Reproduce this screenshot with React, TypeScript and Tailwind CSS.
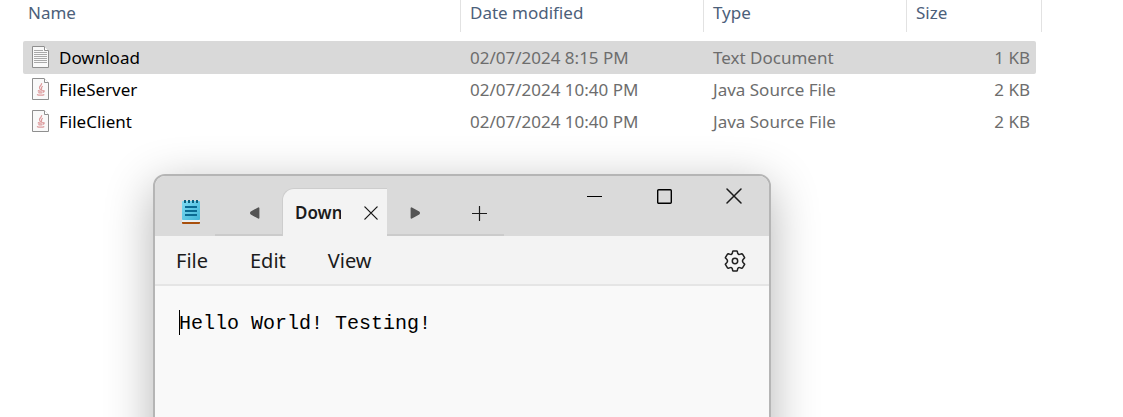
type FileKind = 'text' | 'java';

interface FileRow {
  name: string;
  kind: FileKind;
  modified: string;
  type: string;
  size: string;
  selected?: boolean;
}

const files: FileRow[] = [
  { name: 'Download', kind: 'text', modified: '02/07/2024 8:15 PM', type: 'Text Document', size: '1 KB', selected: true },
  { name: 'FileServer', kind: 'java', modified: '02/07/2024 10:40 PM', type: 'Java Source File', size: '2 KB' },
  { name: 'FileClient', kind: 'java', modified: '02/07/2024 10:40 PM', type: 'Java Source File', size: '2 KB' },
];

const columns = ['Name', 'Date modified', 'Type', 'Size'];

function FileIcon({ kind }: { kind: FileKind }) {
  return (
    <svg width="17" height="22" viewBox="0 0 17 22" className="shrink-0" aria-hidden="true">
      <path d="M.5 .5H12L16.5 5V21.5H.5Z" fill="#f9f9f9" stroke="#8f8f8f" />
      <path d="M12.5 .5V4.5H16.5" fill="#fff" stroke="#8f8f8f" />
      {kind === 'text' ? (
        <path
          d="M2 4.5H11M2 6.5H15M2 8.5H15M2 10.5H15M2 12.5H15M2 14.5H15M2 16.5H15"
          stroke="#a9a9a9"
        />
      ) : (
        <g fill="none" stroke="#dc9a9c" strokeWidth="1.2">
          <path d="M9.6 5.2C10 7.4 7.2 8 7.5 9.8C7.6 10.8 8.6 11 8.4 12" />
          <path d="M10.8 8.2C9 9 9.3 9.8 9.6 10.6C9.8 11.2 9.4 11.6 9 12" />
          <path d="M5.8 12.6C7 13.2 10 13.2 11 12.6M11.2 12.6C12.8 12.4 12.4 13.9 11 14.3" />
          <path d="M6.3 14.5C7.5 15 9.5 15 10.5 14.5" />
          <path d="M5 16.4C6.5 17.4 11 17.4 12.3 16.4" />
        </g>
      )}
    </svg>
  );
}

function NotepadIcon() {
  return (
    <svg width="18" height="24" viewBox="0 0 18 24" aria-hidden="true">
      <defs>
        <linearGradient id="pad" x1="0" y1="0" x2="1" y2="1">
          <stop offset="0" stopColor="#7fdcf3" />
          <stop offset="1" stopColor="#3fb3d6" />
        </linearGradient>
      </defs>
      <path d="M0 22H18V23A1 1 0 0 1 17 24H1A1 1 0 0 1 0 23Z" fill="#a84f0c" />
      <rect y="20" width="18" height="2" fill="#e9eef0" />
      <rect y="1" width="18" height="19" rx="1" fill="url(#pad)" />
      <path d="M3 0V3M7 0V3M11 0V3M15 0V3" stroke="#0b6180" strokeWidth="2" />
      <path d="M3 7H15M3 11H15M3 15H15" stroke="#0a6a92" strokeWidth="2" />
    </svg>
  );
}

function Cross({ size }: { size: number }) {
  return (
    <svg width={size} height={size} viewBox="0 0 16 16" aria-hidden="true">
      <path d="M1 1L15 15M15 1L1 15" stroke="#1b1b1b" strokeWidth="1.5" strokeLinecap="round" />
    </svg>
  );
}

function Gear() {
  return (
    <svg width="22" height="22" viewBox="0 0 22 22" fill="none" stroke="#1f1f1f" strokeWidth="1.5" strokeLinejoin="round" aria-hidden="true">
      <path d="M9.2 .9H12.8Q13.2 .9 13.3 1.4L13.7 3.3Q14.2 4.8 15.7 4.4L17.7 3.8Q18.2 3.7 18.5 4.1L20.5 7.3Q20.8 7.8 20.4 8.1L19.1 9.5Q17.9 11 19.1 12.5L20.4 13.9Q20.8 14.2 20.5 14.7L18.5 17.9Q18.2 18.3 17.7 18.2L15.7 17.6Q14.2 17.2 13.7 18.7L13.3 20.6Q13.2 21.1 12.8 21.1H9.2Q8.8 21.1 8.7 20.6L8.3 18.7Q7.8 17.2 6.3 17.6L4.3 18.2Q3.8 18.3 3.5 17.9L1.5 14.7Q1.2 14.2 1.6 13.9L2.9 12.5Q4.1 11 2.9 9.5L1.6 8.1Q1.2 7.8 1.5 7.3L3.5 4.1Q3.8 3.7 4.3 3.8L6.3 4.4Q7.8 4.8 8.3 3.3L8.7 1.4Q8.8 .9 9.2 .9Z" />
      <circle cx="11" cy="11" r="2.7" />
    </svg>
  );
}

function FileList() {
  return (
    <table className="w-full table-fixed border-separate border-spacing-0 text-left text-[17px] leading-6">
      <colgroup>
        <col />
        <col className="w-[243px]" />
        <col className="w-[203px]" />
        <col className="w-[129px]" />
        <col className="w-[6px]" />
      </colgroup>
      <thead>
        <tr>
          {columns.map((label) => (
            <th key={label} className="p-0 pb-[9px] font-normal text-[#4c607a]">
              <button
                type="button"
                className={`flex h-8 w-full items-start pt-px ${label === 'Name' ? 'border-r border-[#e2e2e2] pl-[5px]' : label === 'Size' ? 'pl-[9px]' : 'border-r border-[#e2e2e2] pl-[9px]'}`}
              >
                {label}
              </button>
            </th>
          ))}
          <td className="p-0 pb-[9px]">
            <div className="h-8 border-r border-[#e2e2e2]" />
          </td>
        </tr>
      </thead>
      <tbody className="text-[#6d6d6d]">
        {files.map((file) => {
          const bg = file.selected ? 'bg-[#d9d9d9]' : '';
          return (
            <tr key={file.name} className={file.selected ? 'h-[33px]' : 'h-8'}>
              <td className={`rounded-l-xs p-0 pl-[9px] ${bg}`}>
                <div className="flex items-start gap-[10px] text-black">
                  <FileIcon kind={file.kind} />
                  {file.name}
                </div>
              </td>
              <td className={`p-0 pl-[9px] ${bg}`}>{file.modified}</td>
              <td className={`p-0 pl-[9px] ${bg}`}>{file.type}</td>
              <td className={`rounded-r-xs p-0 pr-[6px] text-right ${bg}`}>{file.size}</td>
            </tr>
          );
        })}
      </tbody>
    </table>
  );
}

function TitleBar() {
  return (
    <header className="flex h-[60px] shrink-0 justify-between bg-[#dadada]">
      <div className="flex items-end">
        <div className="flex h-12 w-[60px] items-center justify-end pr-[15px]">
          <NotepadIcon />
        </div>
        <button type="button" aria-label="Scroll tabs left" className="flex h-12 w-[67px] items-center justify-center border-b-2 border-[#cbcbcb] pt-1 pl-3">
          <svg width="10" height="12" viewBox="0 0 10 12" aria-hidden="true">
            <path d="M8.5 1.2V10.8L1.2 6.6Q.6 6 1.2 5.4Z" fill="#545454" stroke="#545454" strokeLinejoin="round" strokeWidth="1.8" />
          </svg>
        </button>
        <div className="flex h-12 w-[105px] items-center justify-between rounded-tl-xl border-t border-l border-[#cdcdcd] bg-[#f3f3f3] pr-[9px] pl-3">
          <span className="w-[46px] overflow-hidden text-[17px] leading-6 font-semibold whitespace-nowrap text-[#1b1b1b]">Download</span>
          <button type="button" aria-label="Close tab">
            <Cross size={14} />
          </button>
        </div>
        <div className="flex h-12 gap-[11px] border-b-2 border-[#cbcbcb] pt-1">
          <button type="button" aria-label="Scroll tabs right" className="flex w-14 items-center justify-center">
            <svg width="10" height="12" viewBox="0 0 10 12" aria-hidden="true">
              <path d="M1.5 1.2V10.8L8.8 6.6Q9.4 6 8.8 5.4Z" fill="#545454" stroke="#545454" strokeLinejoin="round" strokeWidth="1.8" />
            </svg>
          </button>
          <button type="button" aria-label="New tab" className="flex w-[50px] items-center justify-center">
            <svg width="15" height="15" viewBox="0 0 15 15" aria-hidden="true">
              <path d="M7.5 .5V14.5M.5 7.5H14.5" stroke="#1b1b1b" strokeWidth="1.2" strokeLinecap="round" />
            </svg>
          </button>
        </div>
      </div>
      <div className="flex h-10">
        <button type="button" aria-label="Minimize" className="flex w-[70px] items-center justify-center">
          <svg width="15" height="15" viewBox="0 0 15 15" aria-hidden="true">
            <path d="M0 7.5H15" stroke="#000" />
          </svg>
        </button>
        <button type="button" aria-label="Maximize" className="flex w-[70px] items-center justify-center">
          <svg width="15" height="15" viewBox="0 0 15 15" aria-hidden="true">
            <rect x=".7" y=".7" width="13.6" height="13.6" rx="1" fill="none" stroke="#000" strokeWidth="1.4" />
          </svg>
        </button>
        <button type="button" aria-label="Close" className="flex w-[70px] items-center justify-center">
          <Cross size={16} />
        </button>
      </div>
    </header>
  );
}

function Notepad() {
  return (
    <section
      aria-label="Notepad"
      className="absolute top-[174px] -bottom-16 left-[153px] flex w-[618px] flex-col overflow-hidden rounded-t-xl border-2 border-[#b5b5b5] bg-[#f9f9f9] shadow-[0_12px_48px_rgba(0,0,0,0.3)]"
    >
      <TitleBar />
      <nav className="flex h-[50px] shrink-0 items-center justify-between border-b-2 border-[#e5e5e5] bg-[#f3f3f3] pt-[2px] pr-[23px] pl-[21px] text-[20px] leading-7 text-[#1b1b1b]">
        <div className="flex gap-[42px]">
          <button type="button">File</button>
          <button type="button">Edit</button>
          <button type="button">View</button>
        </div>
        <button type="button" aria-label="Settings">
          <Gear />
        </button>
      </nav>
      <div className="relative flex flex-1 px-6 pt-[26px]">
        <span className="absolute top-6 left-6 h-[25px] w-px bg-black" />
        <textarea
          aria-label="Text editor"
          defaultValue="Hello World! Testing!"
          spellCheck={false}
          className="flex-1 resize-none bg-transparent font-['Liberation_Mono',monospace] text-[20px] leading-6 text-black outline-none"
        />
      </div>
    </section>
  );
}

export default function App() {
  return (
    <main className="relative min-h-screen overflow-hidden bg-white font-['Noto_Sans','Open_Sans',sans-serif]">
      <div className="pr-[81px] pl-[23px]">
        <FileList />
      </div>
      <Notepad />
    </main>
  );
}
